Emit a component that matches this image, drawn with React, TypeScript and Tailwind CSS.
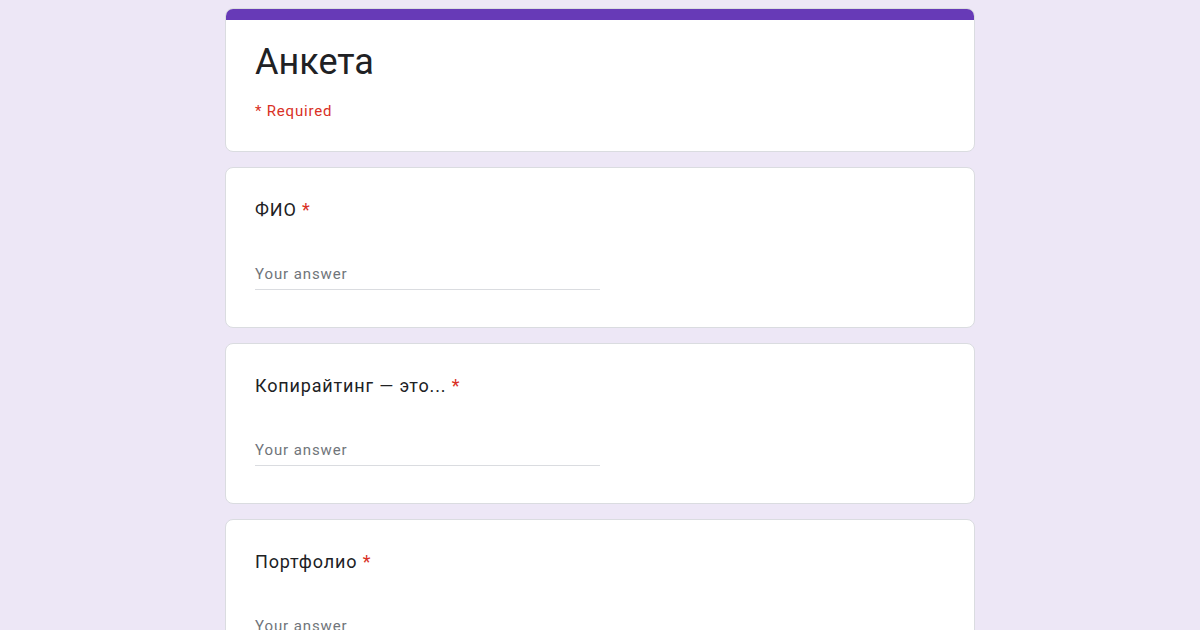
const questions = ['ФИО', 'Копирайтинг — это...', 'Портфолио'];

function QuestionCard({ label }: { label: string }) {
  return (
    <div className="rounded-lg border border-[#dadce0] bg-white px-[29px] pt-[30px] pb-[37px]">
      <div className="text-[18px] leading-6 tracking-[0.85px] text-[#202124]">
        {label} <span className="text-[#d93025]">*</span>
      </div>
      <div className="mt-[40px] w-[345px] border-b border-[#dadce0] pb-[3px]">
        <span className="text-[15px] leading-5 tracking-[0.9px] text-[#70757a]">Your answer</span>
      </div>
    </div>
  );
}

export default function App() {
  return (
    <div
      className="min-h-screen bg-[#ede7f6] pt-2"
      style={{ fontFamily: 'Roboto, "Noto Sans", sans-serif' }}
    >
      <div className="mx-auto flex w-[750px] flex-col gap-[15px]">
        <div className="overflow-hidden rounded-lg border border-[#dadce0] bg-white">
          <div className="h-[11px] bg-[#673ab7]" />
          <div className="px-[29px] pt-[18px] pb-[30px]">
            <h1 className="text-[36px] leading-[48px] text-[#202124]">Анкета</h1>
            <div className="mt-[15px] text-[15px] leading-5 tracking-[0.8px] text-[#d93025]">* Required</div>
          </div>
        </div>
        {questions.map((q) => (
          <QuestionCard key={q} label={q} />
        ))}
      </div>
    </div>
  );
}
